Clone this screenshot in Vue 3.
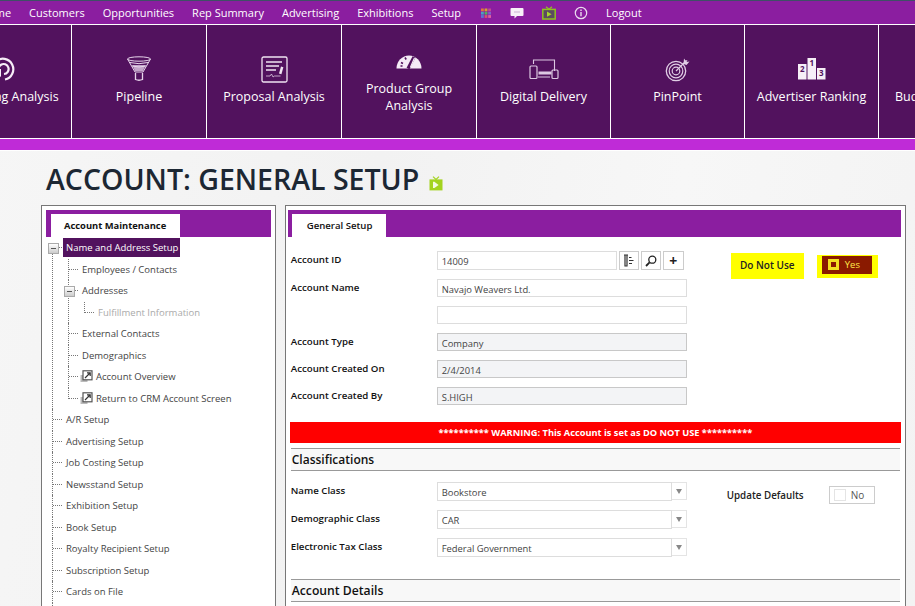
<script setup>
const menu = ['Home', 'Customers', 'Opportunities', 'Rep Summary', 'Advertising', 'Exhibitions', 'Setup']

const tiles = [
  { icon: 'spiral', label: 'Marketing Analysis' },
  { icon: 'funnel', label: 'Pipeline' },
  { icon: 'doc', label: 'Proposal Analysis' },
  { icon: 'gauge', label: 'Product Group Analysis' },
  { icon: 'devices', label: 'Digital Delivery' },
  { icon: 'target', label: 'PinPoint' },
  { icon: 'podium', label: 'Advertiser Ranking' },
  { icon: 'budget', label: 'Budget Summary' }
]

const roots = ['A/R Setup', 'Advertising Setup', 'Job Costing Setup', 'Newsstand Setup', 'Exhibition Setup', 'Book Setup', 'Royalty Recipient Setup', 'Subscription Setup', 'Cards on File']

const classes = [
  { label: 'Name Class', value: 'Bookstore' },
  { label: 'Demographic Class', value: 'CAR' },
  { label: 'Electronic Tax Class', value: 'Federal Government' }
]
</script>

<template>
  <div class="page">
    <nav class="topmenu">
      <div class="menu-items">
        <a v-for="m in menu" :key="m" class="menu-link">{{ m }}</a>
      </div>
      <div class="menu-icons">
        <svg width="12" height="12" viewBox="0 0 12 12">
          <rect x="1" y="1.500" width="2.800" height="2.800" fill="#e0783c" /><rect x="4.600" y="1.500" width="2.800" height="2.800" fill="#d8a030" /><rect x="8.200" y="1.500" width="2.800" height="2.800" fill="#c04a90" />
          <rect x="1" y="4.800" width="2.800" height="2.800" fill="#4aa0c0" /><rect x="4.600" y="4.800" width="2.800" height="2.800" fill="#50b060" /><rect x="8.200" y="4.800" width="2.800" height="2.800" fill="#8060c8" />
          <rect x="1" y="8.100" width="2.800" height="2.800" fill="#6070d0" /><rect x="4.600" y="8.100" width="2.800" height="2.800" fill="#d85070" /><rect x="8.200" y="8.100" width="2.800" height="2.800" fill="#e060a0" />
        </svg>
        <svg width="14" height="12" viewBox="0 0 14 12">
          <path d="M1.500 1h11a1 1 0 0 1 1 1v6a1 1 0 0 1-1 1H7l-2.500 2.600V9h-3a1 1 0 0 1-1-1V2a1 1 0 0 1 1-1z" fill="#f7f0f8" />
          <path d="M4.500 5h1M6.500 5h1M8.500 5h1" stroke="#a070b0" stroke-width="1" />
        </svg>
        <svg width="14" height="14" viewBox="0 0 14 14">
          <path d="M4 .8 7 3.200 10 .8" fill="none" stroke="#8fc31f" stroke-width="1.200" />
          <rect x=".8" y="3.400" width="12.400" height="9.600" fill="#5c4a60" stroke="#8fc31f" stroke-width="1.500" />
          <path d="M5 5.600 9.600 8.200 5 10.800z" fill="#a6d82a" />
        </svg>
        <svg width="14" height="14" viewBox="0 0 14 14" fill="none" stroke="#eadcee">
          <circle cx="7" cy="7" r="5.700" stroke-width="1.200" />
          <path d="M7 6v4.200M7 3.600v1.300" stroke-width="1.400" />
        </svg>
      </div>
      <a class="menu-link">Logout</a>
    </nav>

    <svg class="defs" width="0" height="0">
      <symbol id="popout" viewBox="0 0 13 13">
        <rect x=".5" y="5" width="7" height="7" fill="#bbb" />
        <rect x="3" y=".8" width="9" height="9" fill="#fff" stroke="#555" stroke-width="1.200" />
        <path d="M5 8 10 3M7 2.800h3.200V6" fill="none" stroke="#333" stroke-width="1.200" />
      </symbol>
    </svg>

    <div class="tiles-wrap">
      <div class="tiles">
        <div v-for="t in tiles" :key="t.label" class="tile">
          <div class="tile-icon">
            <svg v-if="t.icon === 'spiral'" width="24" height="24" viewBox="0 0 24 24" fill="none" stroke="#f6edf7" stroke-width="2.200">
              <path d="M5 21A10.500 10.500 0 1 1 13 22.500" />
              <path d="M8 15.500a5 5 0 1 1 4 1.500" />
              <path d="M1 12h8v8l-2.500-2-3 3.500-2.500-2.500 2.500-3z" fill="#f6edf7" stroke="none" />
            </svg>
            <svg v-else-if="t.icon === 'funnel'" width="26" height="26" viewBox="0 0 26 26" fill="none" stroke="#e8d6ec" stroke-width="1">
              <ellipse cx="13" cy="3" rx="11.500" ry="2.200" />
              <path d="M1.500 3 9 16h8l7.500-13" />
              <path d="M4 6.500q9 2.400 18 0M6 10q7 2 14 0" />
              <path d="M6.200 9h13.600L17 15H9z" fill="#e8d6ec" stroke="none" opacity=".75" />
              <path d="M9.500 17v6.500q3.500 1.500 7 0V17" stroke-width="1.300" />
            </svg>
            <svg v-else-if="t.icon === 'doc'" width="27" height="27" viewBox="0 0 27 27" fill="none" stroke="#f0e4f2">
              <rect x="1" y="1" width="25" height="25" rx="1.500" stroke-width="1.300" />
              <path d="M5 6h16M5 10h13M5 14h10" stroke-width="1.500" />
              <path d="M20 10.500l2.400.7-2 7-2.400-.7z" fill="#f0e4f2" stroke="none" />
              <path d="M5 20h4l1.500-2 1.500 3 1.500-1h6" stroke-width=".7" />
            </svg>
            <svg v-else-if="t.icon === 'gauge'" width="26" height="16" viewBox="0 0 26 16">
              <path d="M.5 15.500a12.500 13 0 0 1 25 0z" fill="#f5ecf6" />
              <path d="M12 15.500 18 4" stroke="#52125e" stroke-width="3.200" />
              <path d="M14.500 14 18.500 5" stroke="#f5ecf6" stroke-width="1.200" />
              <path d="M5 9.500l2 1M9 4.500l1.200 2M4.500 13h2" stroke="#52125e" stroke-width="1.600" />
            </svg>
            <svg v-else-if="t.icon === 'devices'" width="30" height="21" viewBox="0 0 30 21" fill="none" stroke="#dcc8e2">
              <path d="M4.500 5V1h21v11M9 18h12" stroke-width="1.100" />
              <path d="M9.500 14h13" stroke-width="3" />
              <rect x="1" y="7" width="7" height="12.500" rx="1" stroke-width="1.200" />
              <rect x="23" y="11" width="6" height="8.500" rx="1" stroke-width="1.200" />
            </svg>
            <svg v-else-if="t.icon === 'target'" width="26" height="26" viewBox="0 0 26 26" fill="none" stroke="#e0cee5">
              <circle cx="11" cy="15" r="9.700" stroke-width="1.300" />
              <circle cx="11" cy="15" r="6.800" stroke-width="1.200" />
              <circle cx="11" cy="15" r="3.800" stroke-width="1.200" />
              <path d="M11 15 21 5" stroke-width="1.300" />
              <path d="M19 2.500l1.500 2 2-.5-1 2 3-.5-3 3.500-3-1z" fill="#e0cee5" stroke="none" />
            </svg>
            <svg v-else-if="t.icon === 'podium'" width="28" height="22" viewBox="0 0 28 22">
              <rect x="0" y="6" width="8.500" height="15.500" fill="#f6eff7" />
              <rect x="9.500" y="0" width="8.500" height="21.500" fill="#f6eff7" />
              <rect x="19" y="10" width="8.500" height="11.500" fill="#f6eff7" />
              <text x="4.200" y="14" class="rank">2</text>
              <text x="13.700" y="8" class="rank">1</text>
              <text x="23.200" y="18" class="rank">3</text>
            </svg>
          </div>
          <div class="tile-label">{{ t.label }}</div>
        </div>
      </div>
    </div>
    <div class="accent"></div>

    <main class="content">
      <h1 class="title">
        ACCOUNT: GENERAL SETUP
        <svg width="14" height="15" viewBox="0 0 14 15">
          <path d="M4 .6 7 3.400 10 .6" fill="none" stroke="#a3d31f" stroke-width="1.200" />
          <rect x=".5" y="3.400" width="13" height="11" fill="#a3d31f" />
          <path d="M4 5.800h1.400L9.600 8.900 5.400 12H4z" fill="#f4fbe0" />
        </svg>
      </h1>

      <div class="panels">
        <aside class="panel side">
          <div class="tabbar"><div class="tab">Account Maintenance</div></div>
          <ul class="tree">
            <li class="node first">
              <div class="row"><span class="minus"></span><span class="hl">Name and Address Setup</span></div>
              <ul class="tree">
                <li class="node"><div class="row">Employees / Contacts</div></li>
                <li class="node">
                  <div class="row"><span class="minus"></span>Addresses</div>
                  <ul class="tree">
                    <li class="node last"><div class="row muted">Fulfillment Information</div></li>
                  </ul>
                </li>
                <li class="node"><div class="row">External Contacts</div></li>
                <li class="node"><div class="row">Demographics</div></li>
                <li class="node">
                  <div class="row"><svg class="popout" width="13" height="13"><use href="#popout" /></svg>Account Overview</div>
                </li>
                <li class="node last">
                  <div class="row"><svg class="popout" width="13" height="13"><use href="#popout" /></svg>Return to CRM Account Screen</div>
                </li>
              </ul>
            </li>
            <li v-for="r in roots" :key="r" class="node"><div class="row">{{ r }}</div></li>
            <li class="node"><div class="row"><span class="hover-bar"></span></div></li>
          </ul>
        </aside>

        <section class="panel mainp">
          <div class="tabbar"><div class="tab">General Setup</div></div>

          <div class="top-form">
            <div class="fields">
              <div class="field">
                <label>Account ID</label>
                <div class="input id-input">14009</div>
                <div class="id-buttons">
                  <button class="sq">
                    <svg width="13" height="13" viewBox="0 0 13 13" fill="none" stroke="#333">
                      <path d="M2 1h4M3 1v11h2V1M7 3.500h2.500M7 6.500h4.500M7 9.500h3" stroke-width="1.200" />
                    </svg>
                  </button>
                  <button class="sq">
                    <svg width="12" height="12" viewBox="0 0 12 12" fill="none" stroke="#222">
                      <circle cx="7.300" cy="4.700" r="3.500" stroke-width="1.300" />
                      <path d="M4.600 7.400 1 11" stroke-width="1.800" />
                    </svg>
                  </button>
                  <button class="sq plus">+</button>
                </div>
              </div>
              <div class="field short">
                <label>Account Name</label>
                <div class="input">Navajo Weavers Ltd.</div>
              </div>
              <div class="field short">
                <label></label>
                <div class="input"></div>
              </div>
              <div class="field short">
                <label>Account Type</label>
                <div class="input readonly">Company</div>
              </div>
              <div class="field short">
                <label>Account Created On</label>
                <div class="input readonly">2/4/2014</div>
              </div>
              <div class="field short">
                <label>Account Created By</label>
                <div class="input readonly">S.HIGH</div>
              </div>
            </div>

            <div class="flags">
              <div class="dnu">Do Not Use</div>
              <div class="yes-wrap">
                <div class="yes"><span class="yes-box"></span>Yes</div>
              </div>
            </div>
          </div>

          <div class="warning">********** WARNING: This Account is set as DO NOT USE **********</div>

          <h2 class="section">Classifications</h2>
          <div class="class-form">
            <div class="fields">
              <div v-for="c in classes" :key="c.label" class="field">
                <label>{{ c.label }}</label>
                <div class="combo">
                  <div class="input combo-text">{{ c.value }}</div>
                  <div class="combo-btn"><span class="arrow"></span></div>
                </div>
              </div>
            </div>
            <div class="defaults">
              <span class="defaults-label">Update Defaults</span>
              <div class="toggle"><span class="toggle-box"></span>No</div>
            </div>
          </div>

          <h2 class="section details">Account Details</h2>
        </section>
      </div>
    </main>
  </div>
</template>

<style scoped>
.page {
  width: 915px;
  height: 606px;
  overflow: hidden;
  font-family: 'Open Sans', 'Noto Sans', sans-serif;
  background: linear-gradient(100deg, #f6f6f6 0%, #f2f2f2 40%, #f7f7f7 70%, #f3f3f3 100%);
  color: #333;
}
.defs {
  position: absolute;
}
.topmenu {
  height: 24px;
  box-sizing: border-box;
  border-top: 1px solid #3f4f66;
  background: #8b1ea0;
  display: flex;
  align-items: center;
}
.menu-items {
  display: flex;
  gap: 18px;
  margin-left: -20px;
}
.menu-link {
  color: #fff;
  font-size: 11px;
  white-space: nowrap;
}
.menu-icons {
  display: flex;
  align-items: center;
  gap: 18px;
  margin: 0 18px 0 19px;
}
.tiles-wrap {
  border-top: 1px solid #fff;
  border-bottom: 1px solid #fff;
  overflow: hidden;
}
.tiles {
  display: flex;
  margin-left: -63px;
  height: 113px;
}
.tile {
  flex: 0 0 135px;
  box-sizing: border-box;
  border-right: 1px solid #fff;
  background: #52125e;
  display: flex;
  flex-direction: column;
  align-items: center;
  justify-content: center;
  gap: 6px;
  padding: 0 8px 2px;
  color: #fff;
}
.tile:nth-child(n + 5) {
  flex-basis: 134px;
}
.tile-icon {
  height: 26px;
  display: flex;
  align-items: center;
  justify-content: center;
}
.tile-label {
  font-size: 12.5px;
  line-height: 17px;
  text-align: center;
}
.tile:first-child .tile-label,
.tile:last-child .tile-label {
  white-space: nowrap;
}
.rank {
  font-size: 8px;
  font-weight: 700;
  text-anchor: middle;
  fill: #52125e;
}
.accent {
  height: 11px;
  background: #bf2bd7;
  border-bottom: 1px solid #fff;
}
.content {
  padding: 0 9px 0 41px;
}
.title {
  margin: 5px 0 4px 5px;
  height: 45px;
  display: flex;
  align-items: center;
  gap: 10px;
  font-size: 28.5px;
  font-weight: 600;
  color: #1c2733;
  white-space: nowrap;
}
.title svg {
  margin-top: 9px;
}
.panels {
  display: flex;
  gap: 9px;
  height: 500px;
}
.panel {
  box-sizing: border-box;
  background: #fff;
  border: 1px solid #777;
  padding-top: 4px;
}
.side {
  width: 235px;
  padding-left: 4px;
  padding-right: 4px;
}
.mainp {
  width: 622px;
  padding-left: 2px;
  padding-right: 4px;
}
.tabbar {
  height: 27px;
  background: #8b1ea0;
  display: flex;
  align-items: flex-end;
  padding-left: 5px;
}
.mainp .tabbar {
  padding-left: 4px;
}
.tab {
  height: 23px;
  line-height: 24px;
  background: #fff;
  color: #111;
  font-size: 9.4px;
  font-weight: 700;
  width: 129px;
  box-sizing: border-box;
  padding-left: 13px;
  white-space: nowrap;
}
.mainp .tab {
  width: 94px;
  padding-left: 15px;
  font-size: 9.6px;
  font-weight: 600;
}
.tree {
  list-style: none;
  margin: 0;
  padding: 0;
  font-size: 9.5px;
  color: #444;
}
.tree .tree {
  padding-left: 16px;
}
.node {
  position: relative;
}
.node::before {
  content: '';
  position: absolute;
  left: 6px;
  top: 0;
  bottom: 0;
  border-left: 1px dotted #777;
}
.node.first::before {
  top: 12px;
}
.node.last::before {
  bottom: auto;
  height: 11px;
}
.row {
  position: relative;
  height: 21.5px;
  line-height: 21px;
  padding-left: 20px;
  white-space: nowrap;
  display: flex;
  align-items: center;
}
.row::before {
  content: '';
  position: absolute;
  left: 7px;
  top: 10px;
  width: 9px;
  border-top: 1px dotted #777;
}
.muted {
  color: #aaa;
}
.minus {
  position: absolute;
  left: 2px;
  top: 6px;
  width: 9px;
  height: 9px;
  border: 1px solid #aaa;
  background: linear-gradient(#fff, #ccc);
  z-index: 1;
}
.minus::after {
  content: '';
  position: absolute;
  left: 2px;
  top: 4px;
  width: 5px;
  height: 1px;
  background: #555;
}
.hl {
  margin-left: -3px;
  padding: 0 2px 0 3px;
  height: 19px;
  line-height: 19px;
  background: #52125e;
  color: #fff;
}
.popout {
  margin: 0 3px 0 -2px;
  flex: none;
}
.hover-bar {
  position: absolute;
  left: 19px;
  top: 12px;
  width: 68px;
  height: 12px;
  background: #f0f0f0;
}
.top-form {
  display: flex;
  padding: 14px 0 0 3px;
}
.fields {
  display: flex;
  flex-direction: column;
  gap: 9px;
}
.field {
  display: flex;
  align-items: center;
  height: 19px;
}
.field.short {
  height: 18px;
}
.field label {
  width: 146px;
  flex: none;
  font-size: 9.7px;
  font-weight: 600;
  color: #111;
  position: relative;
  top: -1px;
}
.input {
  box-sizing: border-box;
  width: 250px;
  height: 100%;
  border: 1px solid #ddd;
  background: #fff;
  font-size: 9.4px;
  line-height: 20px;
  padding-left: 4px;
  color: #444;
}
.input.readonly {
  background: #f3f4f6;
  border: 1px solid #c8c8c8;
}
.id-input {
  width: 180px;
}
.id-buttons {
  display: flex;
  gap: 2px;
  margin-left: 2px;
}
.sq {
  box-sizing: border-box;
  width: 20px;
  height: 19px;
  padding: 0;
  border: 1px solid #ccc;
  background: #fff;
  display: flex;
  align-items: center;
  justify-content: center;
}
.plus {
  font-size: 14px;
  font-weight: 700;
  font-family: inherit;
  color: #222;
  width: 21px;
}
.flags {
  display: flex;
  margin: 2px 0 0 44px;
  gap: 13px;
  align-items: flex-start;
}
.dnu {
  width: 73px;
  height: 26px;
  background: #ffff00;
  color: #222;
  font-size: 10px;
  font-weight: 600;
  line-height: 25px;
  text-align: center;
}
.yes-wrap {
  width: 61px;
  height: 23px;
  margin-top: 2px;
  background: #ffff00;
  padding: 1px 6px 4px 5px;
  box-sizing: border-box;
}
.yes {
  height: 18px;
  box-sizing: border-box;
  padding: 0 0 1px 6px;
  background: #8a1a00;
  display: flex;
  align-items: center;
  color: #ffe84a;
  font-size: 9.5px;
  gap: 6px;
  line-height: 15px;
}
.yes-box {
  width: 5px;
  height: 5px;
  border: 3px solid #f2e020;
  background: #8a1a00;
}
.warning {
  margin: 17px 0 0 2px;
  height: 21px;
  background: #ff0000;
  color: #fff;
  font-size: 9.25px;
  font-weight: 700;
  line-height: 21px;
  text-align: center;
}
.section {
  margin: 5px 1px 0 3px;
  height: 23px;
  box-sizing: border-box;
  border-top: 1px solid #999;
  border-bottom: 1px solid #999;
  background: #f8f8f8;
  font-size: 12px;
  font-weight: 600;
  line-height: 22px;
  color: #111;
  padding-left: 1px;
}
.class-form {
  display: flex;
  padding: 11px 0 0 3px;
}
.class-form .fields {
  gap: 9px;
}
.combo {
  display: flex;
  width: 250px;
  height: 100%;
}
.combo-text {
  width: 235px;
  border-width: 1px;
  border-color: #ddd;
}
.combo-btn {
  width: 15px;
  height: 18px;
  box-sizing: border-box;
  border: 1px solid #e4e4e4;
  border-left: none;
  display: flex;
  align-items: center;
  justify-content: center;
}
.arrow {
  border-left: 3.500px solid transparent;
  border-right: 3.500px solid transparent;
  border-top: 5px solid #888;
}
.defaults {
  display: flex;
  margin: 4px 0 0 40px;
  align-items: center;
  height: 18px;
}
.defaults-label {
  width: 102px;
  font-size: 9.8px;
  font-weight: 600;
  color: #222;
  padding-top: 1px;
}
.toggle {
  box-sizing: border-box;
  width: 46px;
  height: 18px;
  border: 1px solid #ccc;
  display: flex;
  align-items: center;
  gap: 5px;
  padding-left: 4px;
  font-size: 10px;
  line-height: 16px;
  color: #555;
}
.toggle-box {
  width: 10px;
  height: 10px;
  border: 1px solid #e4e4e4;
}
.section.details {
  margin-top: 22px;
  font-size: 12.2px;
}
</style>

<style>
html,
body {
  overflow: hidden;
}
</style>
